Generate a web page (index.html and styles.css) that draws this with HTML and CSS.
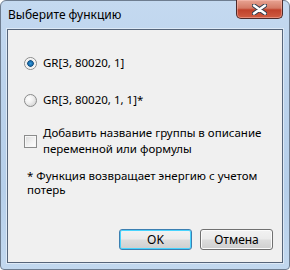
FILE: index.html
```html
<!DOCTYPE html>
<html lang="ru">
  <head>
    <meta charset="UTF-8" />
    <title>Выберите функцию</title>
    <link rel="stylesheet" href="styles.css">
  </head>
  <body>
    <div class="window">
      <div class="titlebar">
        <span class="title">Выберите функцию</span>
        <button class="close-btn" aria-label="Закрыть">
          <svg width="15" height="11" viewBox="0 0 15 11">
            <path d="M2 1.5 L7.5 5.5 L13 1.5 M2 9.5 L7.5 5.5 L13 9.5" stroke="#2d3a4c" stroke-width="4.4" fill="none" stroke-linecap="round"/>
            <path d="M2 1.5 L7.5 5.5 L13 1.5 M2 9.5 L7.5 5.5 L13 9.5" stroke="#ffffff" stroke-width="2.6" fill="none" stroke-linecap="round"/>
          </svg>
        </button>
      </div>

      <div class="client">
        <div class="options">
          <label class="option">
            <span class="radio checked"></span>
            <span>GR[3, 80020, 1]</span>
          </label>
          <label class="option">
            <span class="radio"></span>
            <span>GR[3, 80020, 1, 1]*</span>
          </label>
        </div>

        <label class="check-row">
          <span class="checkbox"></span>
          <span class="check-text">Добавить название группы в описание<br>переменной или формулы</span>
        </label>

        <p class="note">* Функция возвращает энергию с учетом<br>потерь</p>

        <div class="buttons">
          <button class="btn btn-default">OK</button>
          <button class="btn">Отмена</button>
        </div>
      </div>
    </div>
  </body>
</html>
```

FILE: styles.css
```css
/* Window frame */
body {
  margin: 0;
  padding: 0;
  background: #ffffff;
  font-family: "Noto Sans", "Open Sans", sans-serif;
  font-size: 11.5px;
  color: #000000;
}

.window {
  width: 290px;
  height: 270px;
  box-sizing: border-box;
  border: 1px solid #6e7d90;
  border-radius: 6px 6px 4px 4px;
  background: linear-gradient(180deg, #c4d9f0 0%, #bcd3ec 30%, #b6cfea 70%, #c2d8ef 100%);
  display: flex;
  flex-direction: column;
}

.titlebar {
  height: 28px;
  display: flex;
  justify-content: space-between;
  align-items: flex-start;
  padding-left: 7px;
}

.title {
  margin-top: 6px;
  line-height: 16px;
  font-size: 12px;
  color: #000000;
}

.close-btn {
  width: 47px;
  height: 19px;
  margin: -1px 6px 0 0;
  padding: 0;
  border: 1px solid #4d2a2a;
  border-top: none;
  border-radius: 0 0 5px 5px;
  background: linear-gradient(180deg, #e8a493 0%, #d47a66 45%, #c0412b 55%, #cf5c42 100%);
  box-shadow: inset 0 0 0 1px rgba(255, 200, 190, 0.45);
  display: flex;
  align-items: center;
  justify-content: center;
}

/* Dialog content */
.client {
  flex: 1;
  margin: 0 6px 6px 6px;
  border: 1px solid #56657a;
  background: #f0f0f0;
  box-shadow: 0 0 0 1px #dde9f6;
  display: flex;
  flex-direction: column;
  padding: 0 16px 0 16px;
}

.options {
  display: flex;
  flex-direction: column;
  gap: 21px;
  margin-top: 25px;
}

.option {
  display: flex;
  align-items: center;
  gap: 6px;
  line-height: 16px;
}

.radio {
  width: 11px;
  height: 11px;
  border: 1px solid #8b8c8c;
  border-radius: 50%;
  background: radial-gradient(circle at 35% 35%, #ffffff 0%, #f0f0f0 40%, #c9c9c9 100%);
}

.radio.checked {
  background: radial-gradient(circle at 50% 50%, #2f9be0 0%, #1b6aa8 28%, #0c4d80 38%, #e6e6e6 46%, #ffffff 70%, #d4d4d4 100%);
}

.check-row {
  display: flex;
  align-items: center;
  gap: 6px;
  margin-top: 17px;
}

.checkbox {
  flex: none;
  width: 11px;
  height: 11px;
  border: 1px solid #8b8c8c;
  background: linear-gradient(135deg, #d9d9d9 0%, #f4f4f4 60%, #ffffff 100%);
  box-shadow: inset 0 0 0 1px #f7f7f7;
}

.check-text {
  line-height: 16px;
}

.note {
  margin: 12px 0 0 3px;
  line-height: 14px;
}

.buttons {
  margin-top: auto;
  margin-bottom: 12px;
  display: flex;
  justify-content: flex-end;
  gap: 8px;
  margin-right: -7px;
}

.btn {
  width: 73px;
  height: 21px;
  padding: 0;
  font-family: inherit;
  font-size: 12px;
  color: #000000;
  border: 1px solid #707070;
  border-radius: 3px;
  background: linear-gradient(180deg, #f2f2f2 0%, #ebebeb 48%, #dddddd 52%, #cfcfcf 100%);
  box-shadow: inset 0 0 0 1px #fbfbfb;
}

.btn-default {
  border-color: #3c7fb1;
  box-shadow: inset 0 0 0 1px #48d4fe;
}
```
